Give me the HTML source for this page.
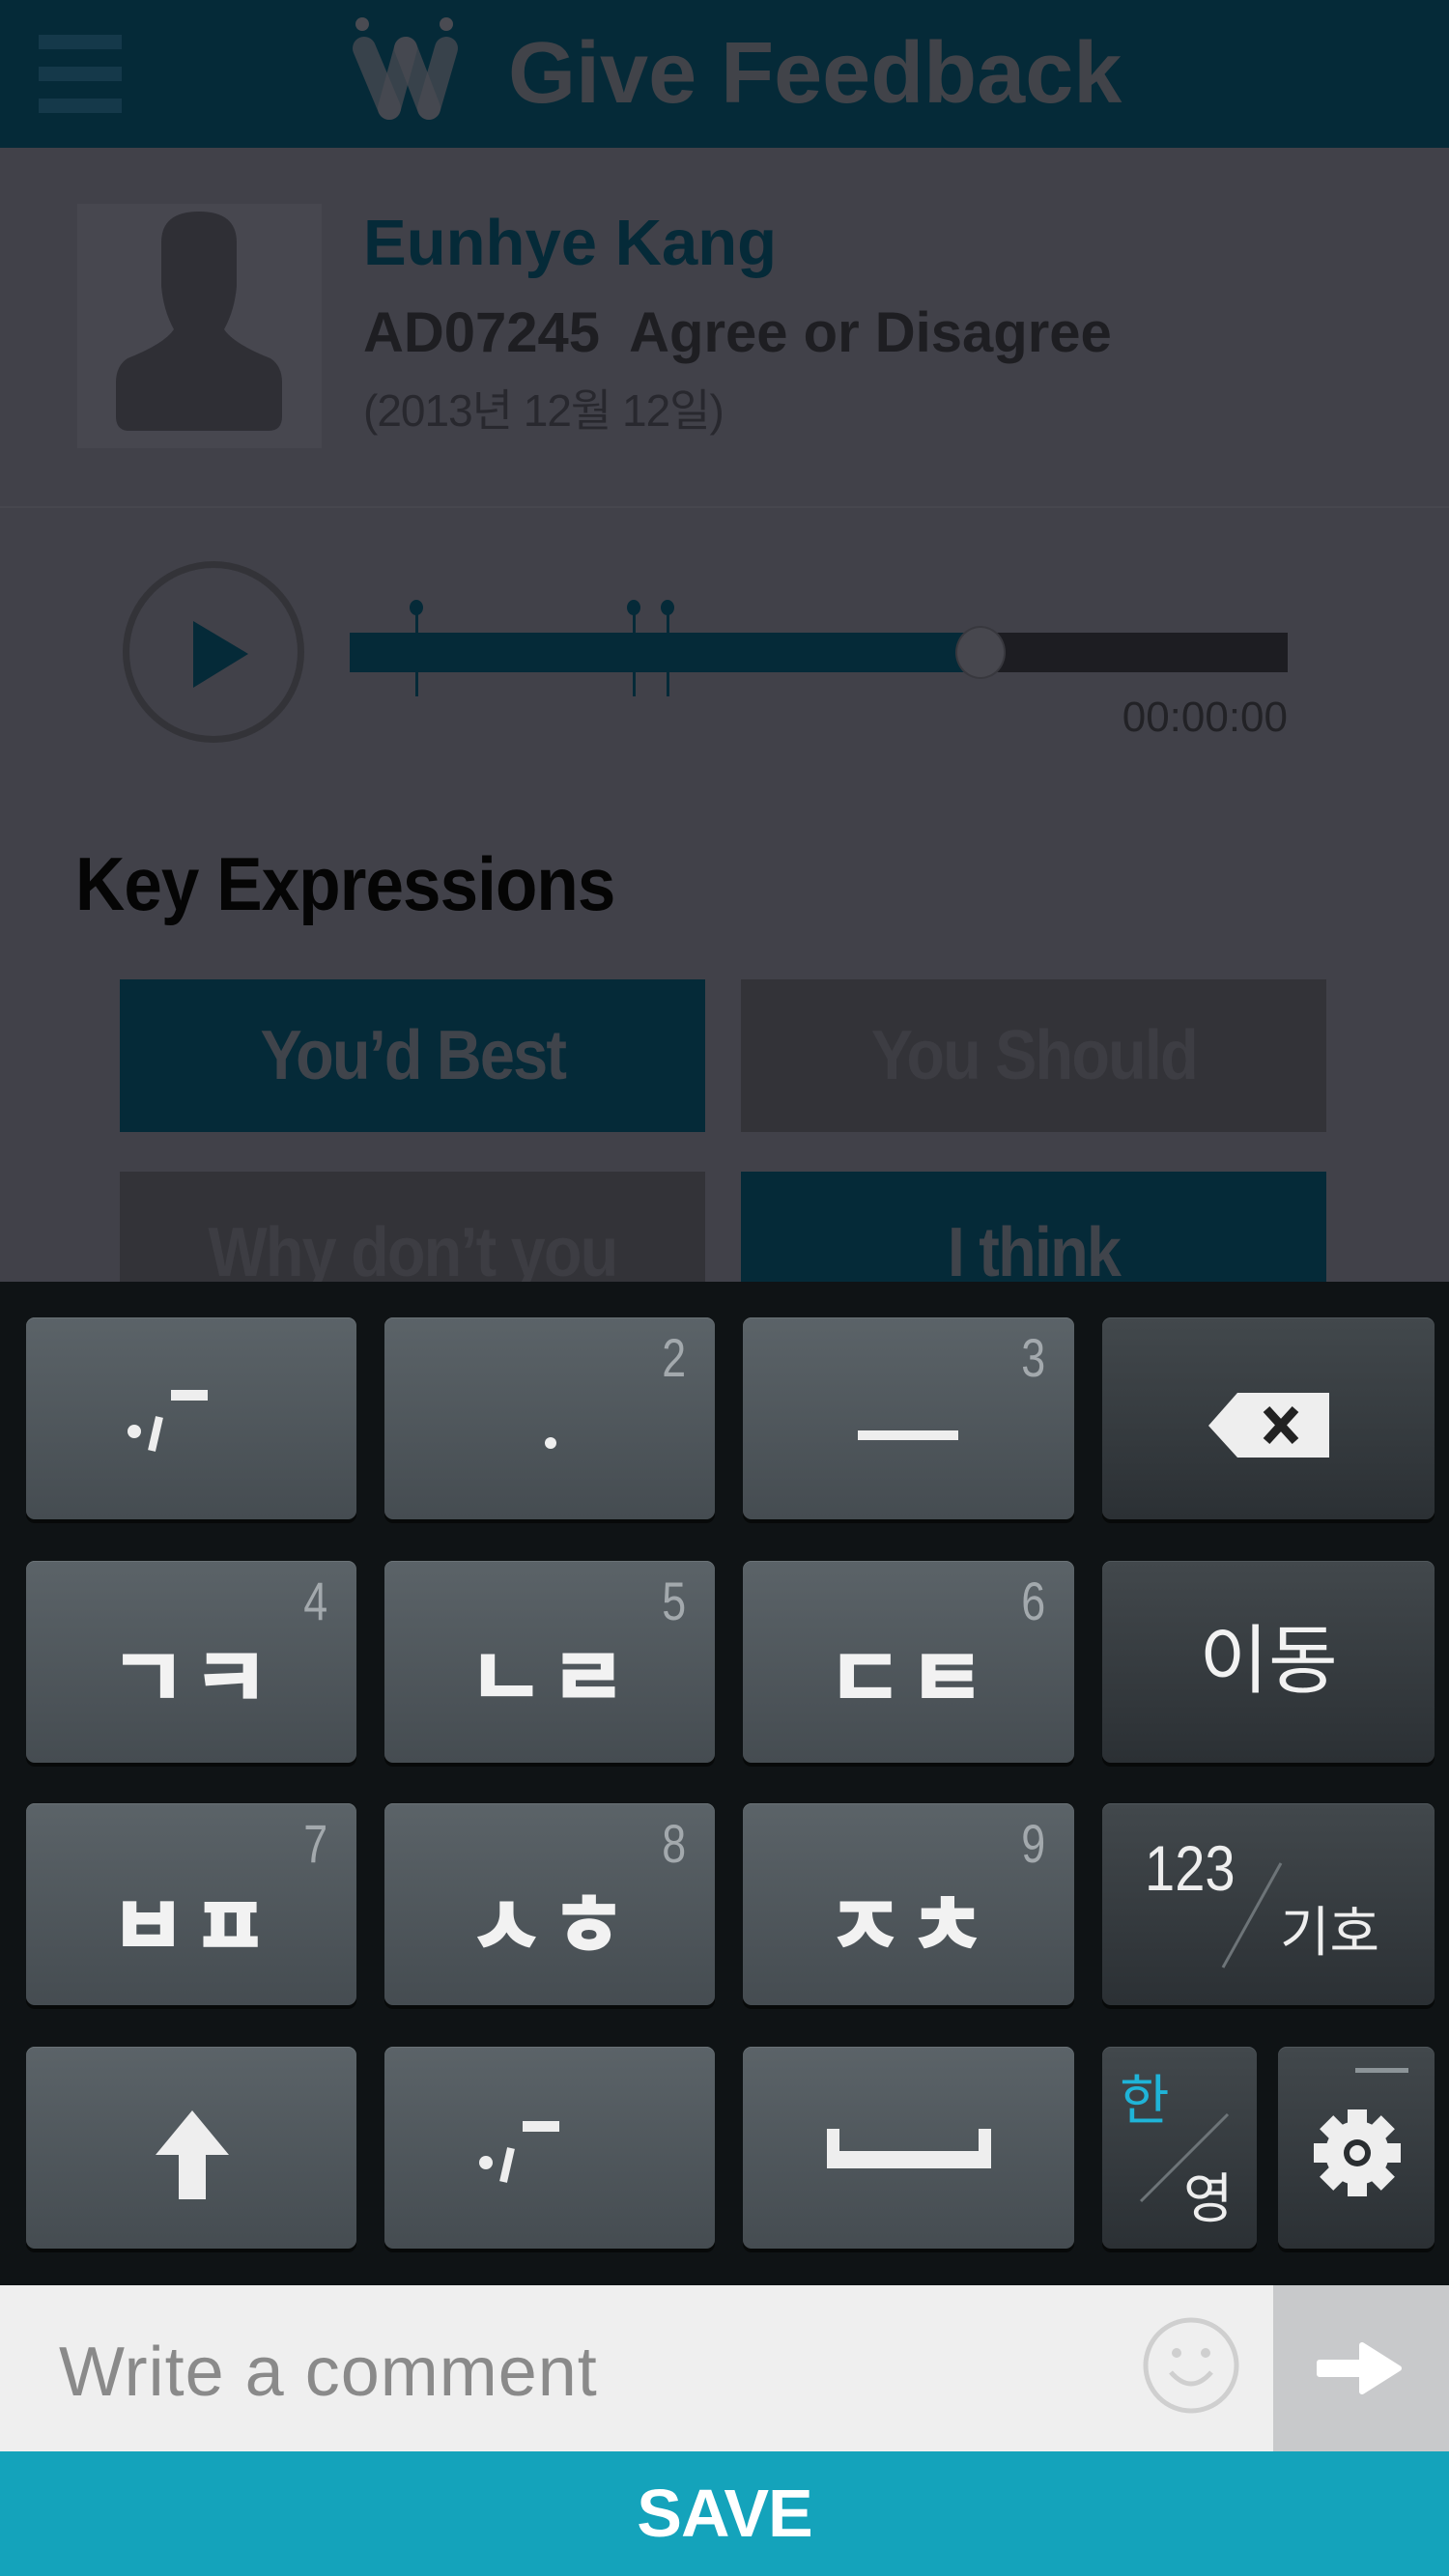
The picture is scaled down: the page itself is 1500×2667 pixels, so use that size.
<!DOCTYPE html>
<html><head><meta charset="utf-8"><style>
*{margin:0;padding:0;box-sizing:border-box}
body{width:1500px;height:2667px;position:relative;overflow:hidden;background:#414149;font-family:"Liberation Sans","Noto Sans CJK KR",sans-serif}
.a{position:absolute}
.key{position:absolute;border-radius:9px;background:linear-gradient(#5b6368,#454c51);box-shadow:0 4px 0 #070909, inset 0 1px 0 #6a7276}
.sp{background:linear-gradient(#42484c,#2b3034);box-shadow:0 4px 0 #070909, inset 0 1px 0 #50575b}
.lb{position:absolute;left:0;right:0;text-align:center;color:#f2f2f2;font-family:"Noto Sans CJK KR",sans-serif;font-weight:900;font-size:88px;line-height:1;letter-spacing:4px}
.num{position:absolute;right:30px;top:14px;color:#a3a9ad;font-size:56px;line-height:1;transform:scaleX(.8);transform-origin:right top}
.btn{position:absolute;font-weight:700;font-size:72px;text-align:center;line-height:158px;letter-spacing:-2px}
.btn span{display:inline-block;transform:scaleX(.9)}
</style></head><body>
<!-- header -->
<div class="a" style="left:0;top:0;width:1500px;height:153px;background:#052a38"></div>
<div class="a" style="left:40px;top:36px;width:86px;height:15px;background:#15394a"></div>
<div class="a" style="left:40px;top:69px;width:86px;height:15px;background:#15394a"></div>
<div class="a" style="left:40px;top:102px;width:86px;height:15px;background:#15394a"></div>
<svg class="a" style="left:350px;top:0" width="150" height="150" viewBox="0 0 150 150">
<g stroke="#4a4b52" stroke-opacity=".75" stroke-width="24" stroke-linecap="round" fill="none">
<line x1="27" y1="50" x2="53" y2="112"/><line x1="70" y1="50" x2="53" y2="112"/>
<line x1="70" y1="50" x2="94" y2="112"/><line x1="112" y1="50" x2="94" y2="112"/></g>
<circle cx="25" cy="25" r="7" fill="#4a4b52"/><circle cx="112" cy="25" r="7" fill="#4a4b52"/></svg>
<div class="a" style="left:526px;top:26px;font-size:90px;font-weight:700;color:#414349;line-height:100px">Give Feedback</div>
<!-- profile -->
<div class="a" style="left:80px;top:211px;width:253px;height:253px;background:#47474f"></div>
<svg class="a" style="left:80px;top:211px" width="253" height="253" viewBox="0 0 253 253">
<path d="M87 70 Q87 38 126 38 Q165 38 165 70 L165 115 Q163 140 152 160 Q162 175 200 190 Q212 198 212 215 L212 250 Q212 265 198 265 L54 265 Q40 265 40 250 L40 215 Q40 198 52 190 Q90 175 100 160 Q89 140 87 115Z" fill="#2f2f35" transform="translate(0,-30)"/></svg>
<div class="a" style="left:376px;top:216px;font-size:67px;font-weight:700;color:#052a38;line-height:72px">Eunhye Kang</div>
<div class="a" style="left:376px;top:313px;font-size:58px;font-weight:700;color:#1e1e22;line-height:64px;white-space:pre">AD07245  Agree or Disagree</div>
<div class="a" style="left:376px;top:398px;font-size:46px;color:#28282e;line-height:54px;letter-spacing:-1px">(2013년 12월 12일)</div>
<div class="a" style="left:0;top:524px;width:1500px;height:2px;background:#47474e"></div>
<!-- player -->
<div class="a" style="left:127px;top:581px;width:188px;height:188px;border-radius:50%;border:7px solid #333338"></div>
<svg class="a" style="left:195px;top:640px" width="70" height="75"><polygon points="5,3 62,37 5,72" fill="#052a38"/></svg>
<div class="a" style="left:362px;top:655px;width:971px;height:41px;background:#1d1d22"></div>
<div class="a" style="left:362px;top:655px;width:653px;height:41px;background:#052a38"></div>
<div class="a" style="left:989px;top:648px;width:52px;height:55px;border-radius:50%;background:#47474e;border:2px solid #38383e"></div>
<div class="a" style="left:430px;top:628px;width:3px;height:93px;background:#052a38"></div>
<div class="a" style="left:424px;top:621px;width:14px;height:16px;border-radius:50%;background:#052a38"></div>
<div class="a" style="left:655px;top:628px;width:3px;height:93px;background:#052a38"></div>
<div class="a" style="left:649px;top:621px;width:14px;height:16px;border-radius:50%;background:#052a38"></div>
<div class="a" style="left:690px;top:628px;width:3px;height:93px;background:#052a38"></div>
<div class="a" style="left:684px;top:621px;width:14px;height:16px;border-radius:50%;background:#052a38"></div>
<div class="a" style="left:1100px;top:718px;width:233px;text-align:right;font-size:44px;color:#222226;line-height:50px">00:00:00</div>
<!-- key expressions -->
<div class="a" style="left:78px;top:872px;font-size:78px;font-weight:700;color:#050505;line-height:86px;transform:scaleX(.91);transform-origin:left;letter-spacing:-1px;white-space:nowrap">Key Expressions</div>
<div class="btn" style="left:124px;top:1014px;width:606px;height:158px;background:#052a38;color:#40444b"><span>You’d Best</span></div>
<div class="btn" style="left:767px;top:1014px;width:606px;height:158px;background:#333338;color:#3d3d43"><span>You Should</span></div>
<div class="btn" style="left:124px;top:1213px;width:606px;height:158px;background:#333338;color:#3d3d43;line-height:168px"><span>Why don’t you</span></div>
<div class="btn" style="left:767px;top:1213px;width:606px;height:158px;background:#052a38;color:#40444b;line-height:168px"><span>I think</span></div>
<!-- keyboard -->
<div class="a" style="left:0;top:1327px;width:1500px;height:1039px;background:#0f1315"></div>
<!-- row1 -->
<div class="key" style="left:27px;top:1364px;width:342px;height:209px">
<svg class="a" style="left:0;top:0" width="342" height="209"><circle cx="112" cy="118" r="7" fill="#eee"/><line x1="138" y1="103" x2="130" y2="138" stroke="#eee" stroke-width="8"/><rect x="150" y="75" width="38" height="11" fill="#eee"/></svg></div>
<div class="key" style="left:398px;top:1364px;width:342px;height:209px"><div class="num">2</div>
<svg class="a" style="left:0;top:0" width="342" height="209"><circle cx="172" cy="130" r="6" fill="#eee"/></svg></div>
<div class="key" style="left:769px;top:1364px;width:343px;height:209px"><div class="num">3</div>
<svg class="a" style="left:0;top:0" width="343" height="209"><rect x="119" y="117" width="104" height="10" fill="#eee"/></svg></div>
<div class="key sp" style="left:1141px;top:1364px;width:344px;height:209px">
<svg class="a" style="left:0;top:0" width="344" height="209"><polygon points="110,112 140,78 235,78 235,145 140,145" fill="#eee"/><g stroke="#222" stroke-width="9"><line x1="170" y1="95" x2="200" y2="128"/><line x1="200" y1="95" x2="170" y2="128"/></g></svg></div>
<!-- row2 -->
<div class="key" style="left:27px;top:1616px;width:342px;height:209px"><div class="num">4</div><div class="lb" style="top:72px">ㄱㅋ</div></div>
<div class="key" style="left:398px;top:1616px;width:342px;height:209px"><div class="num">5</div><div class="lb" style="top:72px">ㄴㄹ</div></div>
<div class="key" style="left:769px;top:1616px;width:343px;height:209px"><div class="num">6</div><div class="lb" style="top:72px">ㄷㅌ</div></div>
<div class="key sp" style="left:1141px;top:1616px;width:344px;height:209px"><div class="lb" style="top:58px;font-weight:400;font-size:78px;letter-spacing:0">이동</div></div>
<!-- row3 -->
<div class="key" style="left:27px;top:1867px;width:342px;height:209px"><div class="num">7</div><div class="lb" style="top:78px">ㅂㅍ</div></div>
<div class="key" style="left:398px;top:1867px;width:342px;height:209px"><div class="num">8</div><div class="lb" style="top:78px">ㅅㅎ</div></div>
<div class="key" style="left:769px;top:1867px;width:343px;height:209px"><div class="num">9</div><div class="lb" style="top:78px">ㅈㅊ</div></div>
<div class="key sp" style="left:1141px;top:1867px;width:344px;height:209px">
<div class="a" style="left:44px;top:34px;color:#eee;font-size:66px;line-height:1;transform:scaleX(.85);transform-origin:left">123</div>
<svg class="a" style="left:0;top:0" width="344" height="209"><line x1="125" y1="170" x2="185" y2="62" stroke="#6d7478" stroke-width="3"/></svg>
<div class="a" style="left:184px;top:102px;color:#eee;font-size:56px;line-height:1;font-family:'Noto Sans CJK KR',sans-serif">기호</div></div>
<!-- row4 -->
<div class="key" style="left:27px;top:2119px;width:342px;height:209px">
<svg class="a" style="left:0;top:0" width="342" height="209"><polygon points="172,66 210,112 186,112 186,158 158,158 158,112 134,112" fill="#eee"/></svg></div>
<div class="key" style="left:398px;top:2119px;width:342px;height:209px">
<svg class="a" style="left:0;top:0" width="342" height="209"><circle cx="105" cy="120" r="7" fill="#eee"/><line x1="131" y1="105" x2="123" y2="140" stroke="#eee" stroke-width="8"/><rect x="143" y="77" width="38" height="11" fill="#eee"/></svg></div>
<div class="key" style="left:769px;top:2119px;width:343px;height:209px">
<svg class="a" style="left:0;top:0" width="343" height="209"><path d="M87 85 V126 H257 V85 H244 V108 H100 V85Z" fill="#eee"/></svg></div>
<div class="key sp" style="left:1141px;top:2119px;width:160px;height:209px">
<div class="a" style="left:18px;top:24px;color:#1fb4d8;font-size:56px;line-height:1;font-family:'Noto Sans CJK KR',sans-serif">한</div>
<svg class="a" style="left:0;top:0" width="160" height="209"><line x1="40" y1="160" x2="130" y2="70" stroke="#6d7478" stroke-width="3"/></svg>
<div class="a" style="left:84px;top:126px;color:#eee;font-size:56px;line-height:1;font-family:'Noto Sans CJK KR',sans-serif">영</div></div>
<div class="key sp" style="left:1323px;top:2119px;width:162px;height:209px">
<div class="a" style="left:80px;top:22px;width:55px;height:5px;background:#8c9498"></div>
<svg class="a" style="left:0;top:0" width="162" height="209"><g transform="translate(82,110)"><g fill="#eee"><circle r="33"/>
<rect x="-10" y="-45" width="20" height="90"/><rect x="-10" y="-45" width="20" height="90" transform="rotate(45)"/><rect x="-10" y="-45" width="20" height="90" transform="rotate(90)"/><rect x="-10" y="-45" width="20" height="90" transform="rotate(135)"/></g>
<circle r="14" fill="#2a2e31"/><circle r="8" fill="#eee"/></g></svg></div>
<!-- comment bar -->
<div class="a" style="left:0;top:2366px;width:1318px;height:172px;background:#efefef"></div>
<div class="a" style="left:1318px;top:2366px;width:182px;height:172px;background:#c8c9cb"></div>
<div class="a" style="left:61px;top:2416px;font-size:72px;color:#8a8a8a;line-height:80px;letter-spacing:1px">Write a comment</div>
<svg class="a" style="left:1180px;top:2396px" width="106" height="106"><circle cx="53" cy="53" r="47" fill="none" stroke="#cfcfcf" stroke-width="5"/><circle cx="38" cy="40" r="5" fill="#cfcfcf"/><circle cx="68" cy="40" r="5" fill="#cfcfcf"/><path d="M32 60 Q53 84 74 60" fill="none" stroke="#cfcfcf" stroke-width="5"/></svg>
<svg class="a" style="left:1360px;top:2420px" width="100" height="64"><path d="M6 26 H50 V8 L88 32 L50 56 V38 H6Z" fill="#fff" stroke="#fff" stroke-width="6" stroke-linejoin="round"/></svg>
<!-- save -->
<div class="a" style="left:0;top:2538px;width:1500px;height:129px;background:#14a3bb;color:#fff;font-weight:700;font-size:70px;text-align:center;line-height:129px;letter-spacing:-1px">SAVE</div>
</body></html>
